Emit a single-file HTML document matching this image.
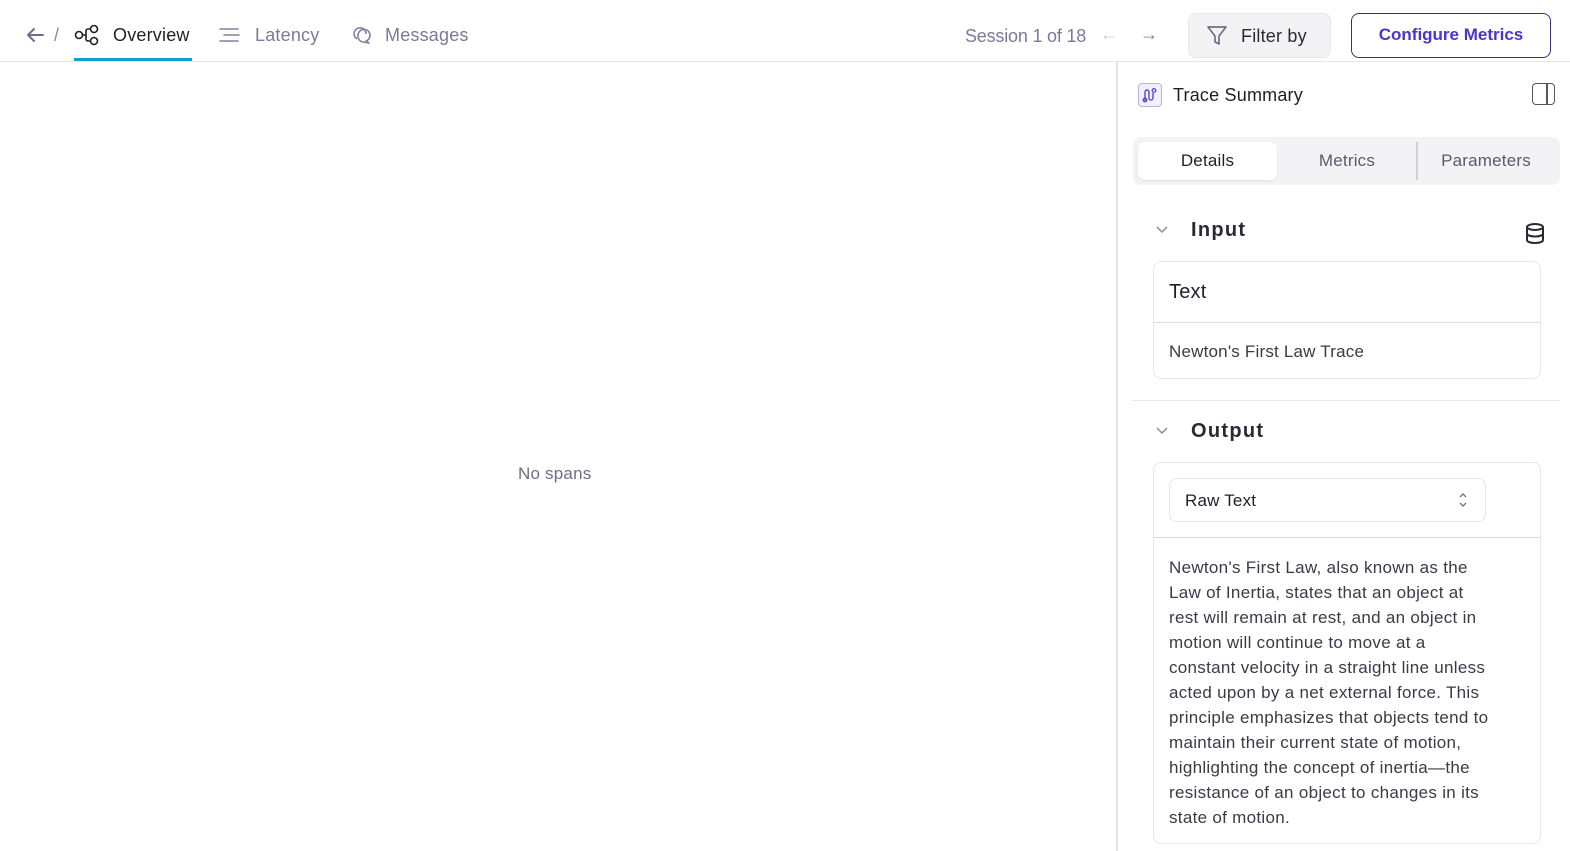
<!DOCTYPE html>
<html><head><style>
*{box-sizing:border-box;margin:0;padding:0}
body{width:1570px;height:851px;overflow:hidden;background:#fff;font-family:"Liberation Sans",sans-serif;color:#1f1f29;position:relative;letter-spacing:0.2px}
.a{position:absolute;white-space:nowrap}
svg{position:absolute}
</style></head><body>
<div class="a" style="left:0;top:61px;width:1570px;height:1px;background:#e3e3e8"></div>
<div class="a" style="left:74px;top:58px;width:118px;height:3px;background:#1a9bd0"></div>
<svg style="left:25px;top:26px" width="20" height="18" viewBox="0 0 20 18"><path d="M18 9H3M9 3L3 9l6 6" fill="none" stroke="#6e6e8c" stroke-width="2" stroke-linecap="round" stroke-linejoin="round"/></svg>
<div class="a" style="left:54px;top:25px;font-size:18px;color:#8a8aa0">/</div>
<svg style="left:74px;top:24px" width="26" height="22" viewBox="0 0 26 22"><circle cx="5" cy="11" r="3.5" fill="none" stroke="#1f1f29" stroke-width="1.6"/><circle cx="20" cy="5" r="3.5" fill="none" stroke="#1f1f29" stroke-width="1.6"/><circle cx="20" cy="17" r="3.5" fill="none" stroke="#1f1f29" stroke-width="1.6"/><path d="M8.5 11h3M16.5 5h-2.5a2 2 0 0 0-2 2v8a2 2 0 0 0 2 2h2.5" fill="none" stroke="#1f1f29" stroke-width="1.6"/></svg>
<div class="a" style="left:113px;top:25px;font-size:18px;color:#1f1f29">Overview</div>
<svg style="left:219px;top:26px" width="22" height="18" viewBox="0 0 22 18"><path d="M1 3h18M5 9h15M1 15h18" stroke="#8080a0" stroke-width="1.6" stroke-linecap="round"/></svg>
<div class="a" style="left:255px;top:25px;font-size:18px;color:#7a7a98">Latency</div>
<svg style="left:349px;top:24px" width="22" height="22" viewBox="0 0 22 22"><path d="M8 15a6 6 0 1 1 9-5" fill="none" stroke="#8080a0" stroke-width="1.6"/><path d="M9 11a6 6 0 1 1 8 6l3 2-6-1a6 6 0 0 1-5-7z" fill="none" stroke="#8080a0" stroke-width="1.6" stroke-linejoin="round"/></svg>
<div class="a" style="left:385px;top:25px;font-size:18px;color:#7a7a98">Messages</div>
<div class="a" style="left:965px;top:26px;font-size:18px;color:#7a7a98;letter-spacing:-0.2px">Session 1 of 18</div>
<div class="a" style="left:1100px;top:24px;font-size:18px;color:#c8c8d4">←</div>
<div class="a" style="left:1140px;top:24px;font-size:18px;color:#7a7a98">→</div>
<div class="a" style="left:1188px;top:13px;width:143px;height:45px;background:#f3f3f6;border:1px solid #e6e6ec;border-radius:8px"></div>
<svg style="left:1206px;top:25px" width="22" height="22" viewBox="0 0 22 22"><path d="M2 2h18l-7 9v8l-4-2v-6z" fill="none" stroke="#6e6e86" stroke-width="1.7" stroke-linejoin="round"/></svg>
<div class="a" style="left:1241px;top:26px;font-size:18px;color:#2a2a35">Filter by</div>
<div class="a" style="left:1351px;top:13px;width:200px;height:45px;border:1.5px solid #3b2c82;border-radius:8px;text-align:center;line-height:42px;font-size:17px;font-weight:bold;color:#4b35c8;letter-spacing:0">Configure Metrics</div>
<div class="a" style="left:1116px;top:62px;width:2px;height:789px;background:#e3e3e8"></div>
<div class="a" style="left:518px;top:464px;font-size:17px;color:#6e6e84">No spans</div>
<div class="a" style="left:1138px;top:83px;width:24px;height:24px;border:1px solid #b9b0e8;background:#f2efff;border-radius:4px"></div>
<svg style="left:1140px;top:85px" width="20" height="20" viewBox="0 0 20 20"><path d="M5 16V7a2 2 0 0 1 4 0v6a2 2 0 0 0 4 0V8" fill="none" stroke="#5b47c8" stroke-width="1.4"/><circle cx="5" cy="15" r="1.8" fill="none" stroke="#5b47c8" stroke-width="1.3"/><circle cx="14" cy="5.5" r="1.8" fill="none" stroke="#5b47c8" stroke-width="1.3"/></svg>
<div class="a" style="left:1173px;top:85px;font-size:18px;color:#1f1f29">Trace Summary</div>
<div class="a" style="left:1532px;top:83px;width:23px;height:22px;border:1.6px solid #55556a;border-radius:4px"></div>
<div class="a" style="left:1546px;top:84px;width:1.6px;height:20px;background:#55556a"></div>
<div class="a" style="left:1133px;top:137px;width:427px;height:48px;background:#f3f3f6;border-radius:8px"></div>
<div class="a" style="left:1138px;top:142px;width:139px;height:38px;background:#fff;border-radius:7px;box-shadow:0 1px 2px rgba(0,0,0,.08);text-align:center;line-height:38px;font-size:17px;color:#1f1f29">Details</div>
<div class="a" style="left:1278px;top:142px;width:138px;height:38px;text-align:center;line-height:38px;font-size:17px;color:#5a5a6e">Metrics</div>
<div class="a" style="left:1416px;top:142px;width:1.5px;height:38px;background:#cfcfd8"></div>
<div class="a" style="left:1418px;top:142px;width:136px;height:38px;text-align:center;line-height:38px;font-size:17px;color:#5a5a6e">Parameters</div>
<svg style="left:1155px;top:224px" width="14" height="12" viewBox="0 0 14 12"><path d="M2 3l5 5 5-5" fill="none" stroke="#8a8aa0" stroke-width="1.5"/></svg>
<div class="a" style="left:1191px;top:219px;font-size:20px;font-weight:bold;letter-spacing:1.3px;color:#2a2a35">Input</div>
<svg style="left:1524px;top:222px" width="22" height="24" viewBox="0 0 22 24"><ellipse cx="11" cy="5" rx="8" ry="3" fill="none" stroke="#2a2a35" stroke-width="2"/><path d="M3 5v13c0 2 4 3 8 3s8-1 8-3V5M3 11.5c0 2 4 3 8 3s8-1 8-3" fill="none" stroke="#2a2a35" stroke-width="2"/></svg>
<div class="a" style="left:1153px;top:261px;width:388px;height:118px;border:1px solid #e6e6ec;border-radius:8px"></div>
<div class="a" style="left:1154px;top:322px;width:386px;height:1px;background:#dcdce4"></div>
<div class="a" style="left:1169px;top:281px;font-size:20px;color:#1f1f29">Text</div>
<div class="a" style="left:1169px;top:342px;font-size:17px;color:#3a3a48">Newton's First Law Trace</div>
<div class="a" style="left:1132px;top:400px;width:428px;height:1px;background:#e6e6ec"></div>
<svg style="left:1155px;top:425px" width="14" height="12" viewBox="0 0 14 12"><path d="M2 3l5 5 5-5" fill="none" stroke="#8a8aa0" stroke-width="1.5"/></svg>
<div class="a" style="left:1191px;top:420px;font-size:20px;font-weight:bold;letter-spacing:1.3px;color:#2a2a35">Output</div>
<div class="a" style="left:1153px;top:462px;width:388px;height:382px;border:1px solid #e6e6ec;border-radius:8px"></div>
<div class="a" style="left:1154px;top:537px;width:386px;height:1px;background:#dcdce4"></div>
<div class="a" style="left:1169px;top:478px;width:317px;height:44px;border:1px solid #e6e6ec;border-radius:8px"></div>
<div class="a" style="left:1185px;top:491px;font-size:17px;color:#1f1f29">Raw Text</div>
<svg style="left:1457px;top:491px" width="12" height="18" viewBox="0 0 12 18"><path d="M3 6l3-3 3 3M3 12l3 3 3-3" fill="none" stroke="#6e6e84" stroke-width="1.3"/></svg>
<div class="a" style="left:1169px;top:555px;font-size:17px;line-height:25px;color:#3a3a48;letter-spacing:0.3px">Newton's First Law, also known as the<br>Law of Inertia, states that an object at<br>rest will remain at rest, and an object in<br>motion will continue to move at a<br>constant velocity in a straight line unless<br>acted upon by a net external force. This<br>principle emphasizes that objects tend to<br>maintain their current state of motion,<br>highlighting the concept of inertia—the<br>resistance of an object to changes in its<br>state of motion.</div>
</body></html>
